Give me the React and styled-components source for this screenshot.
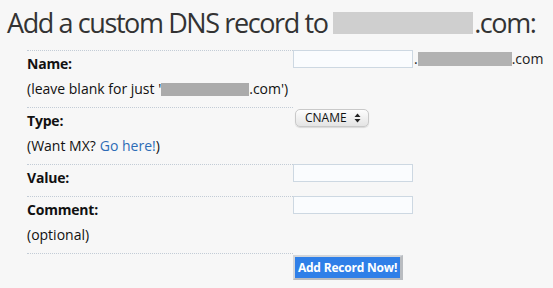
import React from "react";
import styled, { createGlobalStyle } from "styled-components";

const GlobalStyle = createGlobalStyle`
  body {
    margin: 0;
    background: #f7f7f7;
    font-family: "Open Sans", "Liberation Sans", sans-serif;
    color: #111;
  }
`;

const Page = styled.div`
  width: 553px;
  height: 288px;
  overflow: hidden;
  background: #f7f7f7;
`;

const Title = styled.h1`
  margin: 0;
  padding: 6px 0 0 7px;
  height: 50px;
  box-sizing: border-box;
  font-family: "Open Sans", "DejaVu Sans", sans-serif;
  font-weight: 400;
  font-size: 27px;
  line-height: 34px;
  color: #333;
  letter-spacing: -1.4px;
  white-space: nowrap;
  display: flex;
  align-items: flex-start;
`;

const Blur = styled.span`
  display: inline-block;
  width: ${(p) => p.w}px;
  height: ${(p) => p.h}px;
  background: ${(p) => p.c || "#b0b0b0"};
  align-self: center;
  vertical-align: middle;
`;

const TitleBlur = styled(Blur)`
  align-self: flex-start;
  margin: 6px 1px 0 0;
`;

const Form = styled.div`
  display: grid;
  grid-template-columns: 266px 1fr;
  margin-left: 27px;
`;

const LabelCell = styled.div`
  border-top: 1px dotted #c3ccd6;
  padding: ${(p) => (p.short ? "5px 0 0" : "5px 0 10px")};
  height: ${(p) => (p.short ? "29px" : "auto")};
  box-sizing: border-box;
`;

const FieldCell = styled.div`
  padding-top: ${(p) => p.top || 0}px;
  display: flex;
  align-items: flex-start;
  font-size: 14px;
  line-height: 18px;
  color: #222;
`;

const Label = styled.div`
  font-weight: 700;
  font-size: 14px;
  line-height: 16px;
  color: #111;
  letter-spacing: -0.2px;
`;

const Hint = styled.div`
  margin-top: 9px;
  font-size: 14px;
  line-height: 16px;
  color: #111;
  display: flex;
  align-items: center;
  white-space: nowrap;
`;

const Link = styled.a`
  color: #2d6cb6;
  text-decoration: none;
  margin-left: 4px;
`;

const TextInput = styled.input`
  width: 120px;
  height: 18px;
  box-sizing: border-box;
  border: 1px solid #cdd8e2;
  background: #fafcfe;
  padding: 0 3px;
  margin: 0;
  outline: none;
`;

const Domain = styled.span`
  display: flex;
  align-items: center;
  height: 18px;
  margin-left: 1px;
`;

const SelectBox = styled.div`
  width: 74px;
  height: 18px;
  box-sizing: border-box;
  margin-left: 2px;
  border: 1px solid #c9c9c9;
  border-radius: 5px;
  background: linear-gradient(#fdfdfd, #e4e4e4);
  box-shadow: 0 1px 1px rgba(0, 0, 0, 0.12);
  display: flex;
  align-items: center;
  justify-content: space-between;
  padding: 0 7px 0 9px;
  font-size: 12px;
  font-weight: 400;
  color: #111;
`;

const SubmitButton = styled.button`
  margin: 2px 0 0 0;
  width: 110px;
  height: 25px;
  box-sizing: border-box;
  border: 2px solid #d3d6da;
  border-right: 3px solid #b9bcc0;
  border-bottom-color: #b9bcc0;
  background: #2f7fe8;
  color: #fff;
  font-family: "Open Sans", "Liberation Sans", sans-serif;
  font-weight: 700;
  font-size: 12px;
  letter-spacing: -0.2px;
  padding: 0;
`;

const Arrows = () => (
  <svg width="7" height="10" viewBox="0 0 7 10">
    <path d="M3.5 0.5 L6.5 4 H0.5 Z" fill="#222" />
    <path d="M3.5 9.5 L6.5 6 H0.5 Z" fill="#222" />
  </svg>
);

export default function App() {
  return (
    <Page>
      <GlobalStyle />
      <Title>
        Add a custom DNS record to&nbsp;
        <TitleBlur w={140} h={22} c="#cfcfcf" />
        .com:
      </Title>
      <Form>
        <LabelCell>
          <Label>Name:</Label>
          <Hint>
            (leave blank for just '<Blur w={88} h={13} c="#ababab" />.com')
          </Hint>
        </LabelCell>
        <FieldCell>
          <TextInput type="text" />
          <Domain>
            .<Blur w={94} h={14} c="#b2b2b2" />.com
          </Domain>
        </FieldCell>

        <LabelCell>
          <Label>Type:</Label>
          <Hint>
            (Want MX?<Link href="#">Go here!</Link>)
          </Hint>
        </LabelCell>
        <FieldCell top={2}>
          <SelectBox>
            CNAME
            <Arrows />
          </SelectBox>
        </FieldCell>

        <LabelCell>
          <Label>Value:</Label>
        </LabelCell>
        <FieldCell>
          <TextInput type="text" />
        </FieldCell>

        <LabelCell>
          <Label>Comment:</Label>
          <Hint>(optional)</Hint>
        </LabelCell>
        <FieldCell>
          <TextInput type="text" />
        </FieldCell>

        <LabelCell short />
        <FieldCell>
          <SubmitButton type="submit">Add Record Now!</SubmitButton>
        </FieldCell>
      </Form>
    </Page>
  );
}
